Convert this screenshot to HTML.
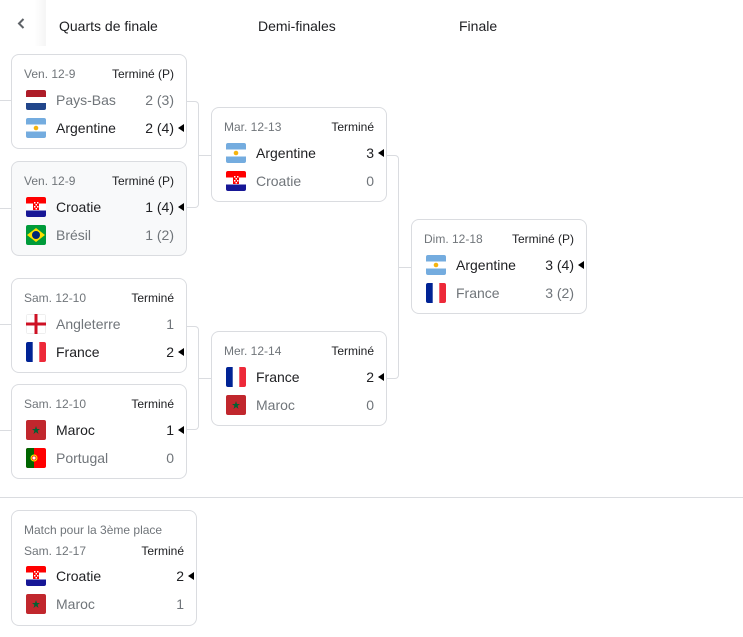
<!DOCTYPE html>
<html><head><meta charset="utf-8">
<style>
*{margin:0;padding:0;box-sizing:border-box}
body{width:743px;height:637px;background:#fff;font-family:"Liberation Sans",Arial,sans-serif;position:relative;overflow:hidden;color:#202124}
.h{position:absolute;top:18px;font-size:14px;color:#202124}
.back{position:absolute;left:0;top:0;width:46px;height:46px;background:linear-gradient(to right,#fff 75%,#f5f5f5);}
.card{position:absolute;width:176px;height:95px;border:1px solid #dadce0;border-radius:8px;background:#fff}
.card.g{background:#f8f9fa}
.hd{position:absolute;left:12px;right:12px;top:12px;font-size:12px;color:#70757a;height:14px}
.hd b{position:absolute;right:0;top:0;font-weight:normal;color:#202124}
.r{position:absolute;left:14px;right:12px;height:20px;font-size:14px;line-height:20px;color:#70757a}
.r.w{color:#202124}
.r svg{position:absolute;left:0;top:0;width:20px;height:20px}
.r .n{position:absolute;left:30px;top:0}
.r .s{position:absolute;right:0;top:0}
.r .a{position:absolute;right:-10px;top:6px;width:0;height:0;border-top:4px solid transparent;border-bottom:4px solid transparent;border-right:6px solid #000}
.ln{position:absolute;background:#dadce0}
</style></head><body>
<svg width="0" height="0" style="position:absolute">
<defs>
<clipPath id="c"><rect width="20" height="20" rx="2"/></clipPath>
<symbol id="nl" viewBox="0 0 20 20"><g clip-path="url(#c)"><rect width="20" height="20" fill="#fff"/><rect width="20" height="7" fill="#ae1c28"/><rect y="13" width="20" height="7" fill="#21468b"/></g></symbol>
<symbol id="ar" viewBox="0 0 20 20"><g clip-path="url(#c)"><rect width="20" height="20" fill="#fff"/><rect width="20" height="6.5" fill="#74acdf"/><rect y="13.5" width="20" height="6.5" fill="#74acdf"/><circle cx="10" cy="10" r="2.3" fill="#f6b40e"/></g></symbol>
<symbol id="hr" viewBox="0 0 20 20"><g clip-path="url(#c)"><rect width="20" height="20" fill="#fff"/><rect width="20" height="6.5" fill="#f00"/><rect y="13.5" width="20" height="6.5" fill="#171796"/><rect x="7" y="5" width="6" height="8" fill="#f00"/><rect x="8" y="5" width="1.5" height="1.5" fill="#fff"/><rect x="11" y="5" width="1.5" height="1.5" fill="#fff"/><rect x="9.5" y="7" width="1.5" height="1.5" fill="#fff"/><rect x="8" y="9" width="1.5" height="1.5" fill="#fff"/><rect x="11" y="9" width="1.5" height="1.5" fill="#fff"/><rect x="9.5" y="11" width="1.5" height="1.5" fill="#fff"/></g></symbol>
<symbol id="br" viewBox="0 0 20 20"><g clip-path="url(#c)"><rect width="20" height="20" fill="#009b3a"/><polygon points="10,3 19,10 10,17 1,10" fill="#fedf00"/><circle cx="10" cy="10" r="4" fill="#002776"/></g></symbol>
<symbol id="en" viewBox="0 0 20 20"><g clip-path="url(#c)"><rect width="20" height="20" fill="#fff" stroke="#ddd"/><rect x="8.5" width="3" height="20" fill="#ce1124"/><rect y="8.5" width="20" height="3" fill="#ce1124"/></g></symbol>
<symbol id="fr" viewBox="0 0 20 20"><g clip-path="url(#c)"><rect width="20" height="20" fill="#fff"/><rect width="6.7" height="20" fill="#002395"/><rect x="13.3" width="6.7" height="20" fill="#ed2939"/></g></symbol>
<symbol id="ma" viewBox="0 0 20 20"><g clip-path="url(#c)"><rect width="20" height="20" fill="#c1272d"/><polygon points="10,6 11,9 14,9 11.6,10.8 12.5,14 10,12 7.5,14 8.4,10.8 6,9 9,9" fill="#006233"/></g></symbol>
<symbol id="pt" viewBox="0 0 20 20"><g clip-path="url(#c)"><rect width="20" height="20" fill="#f00"/><rect width="8" height="20" fill="#006600"/><circle cx="8" cy="10" r="3.5" fill="#ffe900"/><circle cx="8" cy="10" r="2" fill="#fff" stroke="#f00" stroke-width=".8"/></g></symbol>
</defs></svg>

<div class="back"></div>
<svg style="position:absolute;left:16px;top:17px" width="12" height="14" viewBox="0 0 12 14"><path d="M7.5 2 L3 6.5 L7.5 11" stroke="#5f6368" stroke-width="2" fill="none"/></svg>
<div class="h" style="left:59px">Quarts de finale</div>
<div class="h" style="left:258px">Demi-finales</div>
<div class="h" style="left:459px">Finale</div>

<div class="ln" style="left:0;top:100px;width:11px;height:1px"></div>
<div class="ln" style="left:0;top:208px;width:11px;height:1px"></div>
<div class="ln" style="left:0;top:324px;width:11px;height:1px"></div>
<div class="ln" style="left:0;top:430px;width:11px;height:1px"></div>
<div style="position:absolute;left:187px;top:101px;width:12px;height:107px;border:1px solid #dadce0;border-left:none;border-radius:0 4px 4px 0"></div>
<div class="ln" style="left:198px;top:155px;width:13px;height:1px"></div>
<div style="position:absolute;left:187px;top:326px;width:12px;height:104px;border:1px solid #dadce0;border-left:none;border-radius:0 4px 4px 0"></div>
<div class="ln" style="left:198px;top:378px;width:13px;height:1px"></div>
<div style="position:absolute;left:387px;top:155px;width:12px;height:224px;border:1px solid #dadce0;border-left:none;border-radius:0 4px 4px 0"></div>
<div class="ln" style="left:398px;top:267px;width:13px;height:1px"></div>
<div class="ln" style="left:0;top:497px;width:743px;height:1px"></div>

<div class="card" style="left:11px;top:54px"><div class="hd">Ven. 12-9<b>Terminé (P)</b></div>
<div class="r" style="top:35px"><svg><use href="#nl"/></svg><span class="n">Pays-Bas</span><span class="s">2 (3)</span></div>
<div class="r w" style="top:63px"><svg><use href="#ar"/></svg><span class="n">Argentine</span><span class="s">2 (4)</span><i class="a"></i></div></div>

<div class="card g" style="left:11px;top:161px"><div class="hd">Ven. 12-9<b>Terminé (P)</b></div>
<div class="r w" style="top:35px"><svg><use href="#hr"/></svg><span class="n">Croatie</span><span class="s">1 (4)</span><i class="a"></i></div>
<div class="r" style="top:63px"><svg><use href="#br"/></svg><span class="n">Brésil</span><span class="s">1 (2)</span></div></div>

<div class="card" style="left:11px;top:278px"><div class="hd">Sam. 12-10<b>Terminé</b></div>
<div class="r" style="top:35px"><svg><use href="#en"/></svg><span class="n">Angleterre</span><span class="s">1</span></div>
<div class="r w" style="top:63px"><svg><use href="#fr"/></svg><span class="n">France</span><span class="s">2</span><i class="a"></i></div></div>

<div class="card" style="left:11px;top:384px"><div class="hd">Sam. 12-10<b>Terminé</b></div>
<div class="r w" style="top:35px"><svg><use href="#ma"/></svg><span class="n">Maroc</span><span class="s">1</span><i class="a"></i></div>
<div class="r" style="top:63px"><svg><use href="#pt"/></svg><span class="n">Portugal</span><span class="s">0</span></div></div>

<div class="card" style="left:211px;top:107px"><div class="hd">Mar. 12-13<b>Terminé</b></div>
<div class="r w" style="top:35px"><svg><use href="#ar"/></svg><span class="n">Argentine</span><span class="s">3</span><i class="a"></i></div>
<div class="r" style="top:63px"><svg><use href="#hr"/></svg><span class="n">Croatie</span><span class="s">0</span></div></div>

<div class="card" style="left:211px;top:331px"><div class="hd">Mer. 12-14<b>Terminé</b></div>
<div class="r w" style="top:35px"><svg><use href="#fr"/></svg><span class="n">France</span><span class="s">2</span><i class="a"></i></div>
<div class="r" style="top:63px"><svg><use href="#ma"/></svg><span class="n">Maroc</span><span class="s">0</span></div></div>

<div class="card" style="left:411px;top:219px"><div class="hd">Dim. 12-18<b>Terminé (P)</b></div>
<div class="r w" style="top:35px"><svg><use href="#ar"/></svg><span class="n">Argentine</span><span class="s">3 (4)</span><i class="a"></i></div>
<div class="r" style="top:63px"><svg><use href="#fr"/></svg><span class="n">France</span><span class="s">3 (2)</span></div></div>

<div class="card" style="left:11px;top:510px;width:186px;height:116px"><div class="hd">Match pour la 3ème place</div><div class="hd" style="top:33px">Sam. 12-17<b>Terminé</b></div>
<div class="r w" style="top:55px"><svg><use href="#hr"/></svg><span class="n">Croatie</span><span class="s">2</span><i class="a"></i></div>
<div class="r" style="top:83px"><svg><use href="#ma"/></svg><span class="n">Maroc</span><span class="s">1</span></div></div>
</body></html>
